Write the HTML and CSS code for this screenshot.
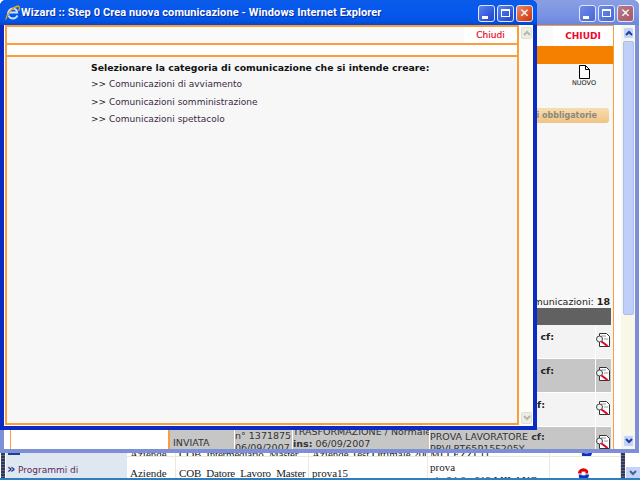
FILE: index.html
```html
<!DOCTYPE html>
<html lang="it">
<head>
  <meta charset="UTF-8" />
  <title>Wizard :: Step 0 Crea nuova comunicazione</title>
  <link rel="stylesheet" href="styles.css">
</head>
<body>
  <!-- third window, only the bottom shows -->
  <div class="win-bottom">
    <div class="bottom-strip"></div>
    <div class="bottom-side">
      <div class="side-line"></div>
      <div class="side-item"><span class="side-arrow">&raquo;</span>Programmi di<br>lavoro</div>
    </div>
    <div class="bottom-table">
      <div class="bt-row bt-top">
        <span class="c1">Aziende</span><span class="c2">COB_Intermediario_Master</span><span class="c3">Aziende Test Ottimale 2006</span><span class="c4">MI LEZZI 11</span><span class="c5"><svg class="refresh" width="13" height="13" viewBox="0 0 14 14"><path d="M1 7a6 6 0 0 1 11-3v3H1z" fill="#e00000"/><path d="M13 8a6 6 0 0 1-11 3V8h11z" fill="#1030c0"/><rect x="5" y="5" width="4" height="4" fill="#fff"/></svg></span>
      </div>
      <div class="bt-row">
        <span class="c1">Aziende</span><span class="c2">COB_Datore_Lavoro_Master</span><span class="c3">prova15</span><span class="c4">prova<br>via 84 6 - 813 MILANO</span><span class="c5"><svg class="refresh" width="13" height="13" viewBox="0 0 14 14"><path d="M1 7a6 6 0 0 1 11-3v3H1z" fill="#e00000"/><path d="M13 8a6 6 0 0 1-11 3V8h11z" fill="#1030c0"/><rect x="5" y="5" width="4" height="4" fill="#fff"/></svg></span>
      </div>
    </div>
    <div class="bottom-bar"></div>
    <div class="bottom-scroll"><svg width="8" height="6" viewBox="0 0 8 6"><path d="M1 1l3 3 3-3" fill="none" stroke="#4d6185" stroke-width="2"/></svg></div>
  </div>

  <!-- window behind the wizard -->
  <div class="win win-back">
    <div class="titlebar">
      <div class="winbtns">
        <span class="btn"><i class="ic-min"></i></span>
        <span class="btn"><i class="ic-max"></i></span>
        <span class="btn btn-close">&#10005;</span>
      </div>
    </div>
    <div class="client">
      <div class="back-page">
        <div class="back-top"><a class="chiudi-big">CHIUDI</a></div>
        <div class="back-bar"></div>
        <div class="nuovo">
          <svg width="11" height="14" viewBox="0 0 11 14"><path d="M.5.5h6l4 4v9H.5z" fill="#fff" stroke="#000"/><path d="M6.5.5v4h4" fill="none" stroke="#000"/></svg>
          <span>NUOVO</span>
        </div>
        <div class="tan-bar">Comunicazioni obbligatorie</div>
        <div class="totale">Totale comunicazioni: <b>18</b></div>
        <div class="list-head"></div>
        <div class="list-row">
          <div class="cell-main">LAVORATORE <b>cf:</b></div>
          <div class="cell-ico"><svg class="doc" width="14" height="14" viewBox="0 0 14 14"><use href="#doc-ico"/></svg></div>
        </div>
        <div class="list-row alt">
          <div class="cell-main">LAVORATORE <b>cf:</b></div>
          <div class="cell-ico"><svg class="doc" width="14" height="14" viewBox="0 0 14 14"><use href="#doc-ico"/></svg></div>
        </div>
        <div class="list-row">
          <div class="cell-main short"><b>cf:</b></div>
          <div class="cell-ico"><svg class="doc" width="14" height="14" viewBox="0 0 14 14"><use href="#doc-ico"/></svg></div>
        </div>
        <div class="list-row alt last">
          <div class="cell-left"></div>
          <div class="cell-stato">INVIATA</div>
          <div class="cell-num">n° 1371875<br>06/09/2007</div>
          <div class="cell-tipo">TRASFORMAZIONE / Normale<br><b>ins:</b> 06/09/2007</div>
          <div class="cell-nome">PROVA LAVORATORE <b>cf:</b><br>PRVLRT65P15F205Y</div>
          <div class="cell-ico"><svg class="doc" width="14" height="14" viewBox="0 0 14 14"><use href="#doc-ico"/></svg></div>
        </div>
      </div>
      <div class="scrollbar">
        <div class="sb-btn"><svg width="8" height="6" viewBox="0 0 8 6"><path d="M1 5l3-3 3 3" fill="none" stroke="#1f3f8f" stroke-width="2"/></svg></div>
        <div class="sb-thumb"></div>
        <div class="sb-space"></div>
        <div class="sb-btn"><svg width="8" height="6" viewBox="0 0 8 6"><path d="M1 1l3 3 3-3" fill="none" stroke="#1f3f8f" stroke-width="2"/></svg></div>
      </div>
    </div>
  </div>

  <!-- wizard popup -->
  <div class="win win-front">
    <div class="titlebar">
      <svg class="ie-logo" width="15" height="16" viewBox="0 0 15 16"><path d="M3 10c0-4 2.500-6.500 5-6.500s4 2 4 4H4.500" fill="none" stroke="#cfe0ff" stroke-width="2.200"/><path d="M12.500 10.500c-1 2-2.500 3-4.500 3-2.500 0-4-1.500-4.500-3" fill="none" stroke="#cfe0ff" stroke-width="1.800"/><path d="M.8 14.500C2 8 8 1.800 13.500 1c1.200 1 1 3 .2 5" fill="none" stroke="#e8a21c" stroke-width="1.300"/></svg>
      <span class="title">Wizard :: Step 0 Crea nuova comunicazione - Windows Internet Explorer</span>
      <div class="winbtns">
        <span class="btn"><i class="ic-min"></i></span>
        <span class="btn"><i class="ic-max"></i></span>
        <span class="btn btn-close">&#10005;</span>
      </div>
    </div>
    <div class="client">
      <div class="wiz-page">
        <div class="wiz-top"><a class="chiudi">Chiudi</a></div>
        <div class="wiz-gap"></div>
        <div class="wiz-body">
          <h4>Selezionare la categoria di comunicazione che si intende creare:</h4>
          <p>&gt;&gt; <a>Comunicazioni di avviamento</a></p>
          <p>&gt;&gt; <a>Comunicazioni somministrazione</a></p>
          <p>&gt;&gt; <a>Comunicazioni spettacolo</a></p>
        </div>
      </div>
      <div class="scrollbar off">
        <div class="sb-btn"><svg width="8" height="6" viewBox="0 0 8 6"><path d="M1 5l3-3 3 3" fill="none" stroke="#b5b8a8" stroke-width="2"/></svg></div>
        <div class="sb-space"></div>
        <div class="sb-btn"><svg width="8" height="6" viewBox="0 0 8 6"><path d="M1 1l3 3 3-3" fill="none" stroke="#b5b8a8" stroke-width="2"/></svg></div>
      </div>
    </div>
  </div>

  <svg class="defs" width="0" height="0">
    <symbol id="doc-ico" viewBox="0 0 14 14">
      <path d="M3.500.5h7l3 3v10h-10z" fill="#fff" stroke="#333"/>
      <path d="M5 3h5M8 6h4" stroke="#999"/>
      <circle cx="3.500" cy="6" r="3" fill="#eef2f2" stroke="#444"/>
      <path d="M5.500 8.500l6 4.500" stroke="#e00020" stroke-width="2"/>
    </symbol>
  </svg>
</body>
</html>
```

FILE: styles.css
```css
html, body {
  margin: 0;
  padding: 0;
  height: 100%;
  overflow: hidden;
}

body {
  position: relative;
  width: 640px;
  height: 480px;
  background: #fff;
  font-family: Verdana, "DejaVu Sans", sans-serif;
}

/* windows on the desktop */
.win {
  position: absolute;
  box-sizing: border-box;
  display: flex;
  flex-direction: column;
  border-radius: 6px 6px 0 0;
}

.win-front {
  left: 0;
  top: 0;
  width: 537px;
  height: 430px;
  padding: 0 4px 4px 4px;
  z-index: 3;
  background: #0a2cc4;
}

.win-back {
  left: 0;
  top: 0;
  width: 639px;
  height: 453px;
  padding: 0 4px 4px 4px;
  z-index: 2;
  background: #7d8fd6;
}

.titlebar {
  height: 25px;
  flex: none;
  display: flex;
  align-items: center;
  color: #fff;
}

.win-front .titlebar {
  background: linear-gradient(#0a5be8, #0658ee 40%, #0353e5 85%, #0246c9);
  margin: 0 -4px;
  padding: 0 4px 0 5px;
  border-radius: 6px 6px 0 0;
}

.win-back .titlebar {
  background: linear-gradient(#8a9fe2, #7a93e4 60%, #6c86da);
  margin: 0 -4px;
  padding: 0 5px 0 5px;
  border-radius: 6px 6px 0 0;
}

.ie-logo {
  flex: none;
  margin: 0 1px 0 0;
}

.title {
  font: bold 11px Roboto, "Liberation Sans", sans-serif;
  letter-spacing: .1px;
  white-space: nowrap;
  text-shadow: 1px 1px 0 #0a2f9c;
}

.winbtns {
  margin-left: auto;
  display: flex;
  gap: 2px;
}

.btn {
  box-sizing: border-box;
  width: 17px;
  height: 17px;
  border: 1px solid #dfe8ff;
  border-radius: 3px;
  background: linear-gradient(135deg, #5e84ee, #2e55d8 70%, #2347c4);
  position: relative;
  display: block;
  margin-top: 1px;
}

.btn-close {
  background: linear-gradient(135deg, #ea8a66, #d84a22 70%, #c03a18);
  color: #fff;
  font: bold 12px/15px "DejaVu Sans", sans-serif;
  text-align: center;
}

.ic-min {
  position: absolute;
  left: 3px;
  bottom: 2px;
  width: 6px;
  height: 3px;
  background: #fff;
}

.ic-max {
  position: absolute;
  left: 3px;
  top: 3px;
  width: 9px;
  height: 8px;
  box-sizing: border-box;
  border: 1px solid #fff;
  border-top-width: 2px;
}

.win-back .btn {
  background: linear-gradient(135deg, #6d8be6, #4766d8);
}

.win-back .btn-close {
  background: linear-gradient(135deg, #b77d88, #a65566);
}

.client {
  flex: 1;
  min-height: 0;
  display: flex;
  background: #fff;
}

/* wizard page */
.wiz-page {
  flex: 1;
  min-width: 0;
  box-sizing: border-box;
  border: 2px solid #fa9d3a;
  background: #f7f7f7;
  display: flex;
  flex-direction: column;
  margin: 0 0 1px 1px;
}

.wiz-top {
  height: 16px;
  flex: none;
  background: #fafafa;
  border-bottom: 2px solid #fa9d3a;
  display: flex;
  justify-content: flex-end;
}

.chiudi {
  width: 53px;
  background: #fff;
  color: #f0082c;
  font-size: 9px;
  line-height: 16px;
  text-align: center;
  -webkit-text-stroke: .2px #f0082c;
}

.wiz-gap {
  height: 10px;
  flex: none;
  background: #fff;
  border-bottom: 2px solid #fa9d3a;
}

.wiz-body {
  padding: 5px 0 0 84px;
  font-size: 9px;
  color: #222;
}

.wiz-body h4 {
  margin: 0 0 4px;
  font-size: 9.3px;
  line-height: 12px;
  font-weight: bold;
  color: #111;
}

.wiz-body p {
  margin: 0 0 5.500px;
  line-height: 12px;
  height: 12px;
}

.wiz-body a {
  color: #3a2a44;
}

/* scrollbars */
.scrollbar {
  width: 14px;
  flex: none;
  box-sizing: border-box;
  padding: 2px 1px 2px 2px;
  display: flex;
  flex-direction: column;
  background: #f9f7e8;
}

.sb-btn {
  height: 12px;
  flex: none;
  border-radius: 2px;
  background: #c3d3fb;
  border: 1px solid #eef3ff;
  box-sizing: border-box;
  display: flex;
  align-items: center;
  justify-content: center;
}

.sb-thumb {
  height: 274px;
  margin-top: 2px;
  flex: none;
  background: #c0cffa;
  border: 1px solid #a9bdf2;
  box-sizing: border-box;
  border-radius: 2px;
}

.sb-space {
  flex: 1;
}

.scrollbar.off {
  background: #fcfcf8;
}

.off .sb-btn {
  background: #eeede4;
  border-color: #e0dfd4;
}

/* page behind */
.back-page {
  flex: 1;
  min-width: 0;
  margin: 0 7px 0 6px;
  border: solid #fa9d3a;
  border-width: 1px 1px 0 1px;
  background: #f7f7f7;
  display: flex;
  flex-direction: column;
  font-size: 9px;
  color: #222;
  overflow: hidden;
}

.back-top {
  height: 20px;
  flex: none;
  background: #fafafa;
  display: flex;
  justify-content: flex-end;
}

.chiudi-big {
  width: 60px;
  background: #fff;
  color: #f0082c;
  font-size: 9px;
  font-weight: bold;
  line-height: 21px;
  text-align: center;
}

.back-bar {
  height: 18px;
  flex: none;
  background: #f58000;
}

.nuovo {
  height: 44px;
  flex: none;
  display: flex;
  flex-direction: column;
  align-items: flex-end;
  padding: 1px 17px 0 0;
  box-sizing: border-box;
}

.nuovo svg {
  margin-right: 6px;
}

.nuovo span {
  font-size: 6.500px;
  line-height: 10px;
  margin-top: -1px;
  color: #111;
}

.tan-bar {
  height: 15px;
  flex: none;
  box-sizing: border-box;
  margin-right: 4px;
  padding-right: 12px;
  background: linear-gradient(#f8dcb0, #f0c484);
  border-radius: 3px;
  color: #8a8a7a;
  font-weight: bold;
  font-size: 8px;
  line-height: 15px;
  text-align: right;
}

.totale {
  height: 14px;
  margin-top: 171px;
  flex: none;
  text-align: right;
  padding-right: 3px;
  font-size: 9.500px;
  line-height: 16px;
  white-space: nowrap;
}

.list-head {
  height: 17px;
  flex: none;
  background: #616161;
  margin-right: 2px;
}

.list-row {
  height: 33px;
  flex: none;
  display: flex;
  margin-right: 2px;
  background: #f3f3f3;
  border-bottom: 1px solid #fff;
}

.list-row.alt {
  background: #c6c6c6;
}

.cell-main {
  flex: 1;
  text-align: right;
  padding: 6px 41px 0 0;
  font-size: 9.500px;
  white-space: nowrap;
}

.cell-main.short {
  padding-right: 50px;
}

.cell-ico {
  width: 16px;
  flex: none;
  border-left: 1px solid #fff;
  padding-top: 8px;
  box-sizing: border-box;
}

.doc {
  display: block;
}

.list-row.last {
  font-size: 9.500px;
  line-height: 12px;
  color: #333;
  white-space: nowrap;
  overflow: hidden;
}

.cell-left {
  width: 157px;
  flex: none;
  margin-right: 2px;
  background: #fff;
  border-right: 2px solid #fa9d3a;
}

.cell-stato {
  width: 63px;
  flex: none;
  padding: 10px 0 0 1px;
  box-sizing: border-box;
  border-right: 1px solid #fff;
}

.cell-num {
  width: 57px;
  flex: none;
  padding-top: 3px;
  border-right: 1px solid #fff;
  overflow: hidden;
}

.cell-tipo {
  width: 136px;
  flex: none;
  margin-top: -1px;
  border-right: 1px solid #fff;
  overflow: hidden;
}

.cell-nome {
  flex: 1;
  padding-top: 4px;
  overflow: hidden;
}

/* window at the very back */
.win-bottom {
  position: absolute;
  left: 0;
  top: 453px;
  width: 640px;
  height: 27px;
  background: #fff;
  display: flex;
  z-index: 1;
  overflow: hidden;
  border-bottom: 2px solid #2f7fc0;
  box-sizing: border-box;
}

.bottom-strip {
  width: 4px;
  margin: 0 1px 0 1px;
  flex: none;
  background: repeating-linear-gradient(#2e3a5c 0 2px, #5a6480 2px 3px);
}

.bottom-side {
  width: 121px;
  flex: none;
  background: #dfe7f1;
  font: 9px "DejaVu Sans", sans-serif;
  color: #5b2a5c;
  overflow: hidden;
}

.side-line {
  height: 2px;
  width: 12px;
  margin-left: 2px;
  background: #1d3f8f;
}

.side-item {
  padding: 9px 0 0 1px;
  line-height: 12px;
  white-space: nowrap;
}

.side-arrow {
  display: inline-block;
  width: 11px;
  color: #1d3f8f;
  font-size: 13px;
  font-weight: bold;
  line-height: 10px;
}

.bottom-table {
  width: 494px;
  flex: none;
  font: 11px "Liberation Serif", "Times New Roman", serif;
  color: #1a1a1a;
}

.bt-row {
  display: flex;
  height: 22px;
  white-space: nowrap;
}

.bt-top {
  height: 3px;
  border-bottom: 1px solid #ece9d8;
}

.bt-row span {
  display: block;
  flex: none;
  box-sizing: border-box;
  height: 100%;
  padding: 10px 0 0 3px;
  line-height: 12px;
  border-right: 1px solid #ece9d8;
  overflow: hidden;
}

.bt-top span {
  padding-top: 0;
  line-height: 3px;
}

.c1 { width: 49px; }
.c2 { width: 133px; letter-spacing: -.2px; }
.c3 { width: 119px; }
.c4 { width: 122px; }
.c5 { width: 71px; position: relative; }

.bt-row .c4 {
  padding: 4px 0 0 2px;
  line-height: 13px;
}

.bt-top .c4 {
  padding: 0 0 0 2px;
  line-height: 3px;
}

.bt-row .c5 {
  padding: 10px 0 0 27px;
}

.bt-top .c5 {
  padding: 0 0 0 30px;
}

.refresh {
  display: block;
}

.bt-top .refresh {
  margin-top: -8px;
}

.bottom-bar {
  width: 4px;
  flex: none;
  background: repeating-linear-gradient(#2e3a5c 0 2px, #5a6480 2px 3px);
}

.bottom-scroll {
  position: absolute;
  right: 0;
  top: 14px;
  width: 14px;
  height: 11px;
  background: #c3d3fb;
  display: flex;
  align-items: center;
  justify-content: center;
}

.defs {
  position: absolute;
}
```
